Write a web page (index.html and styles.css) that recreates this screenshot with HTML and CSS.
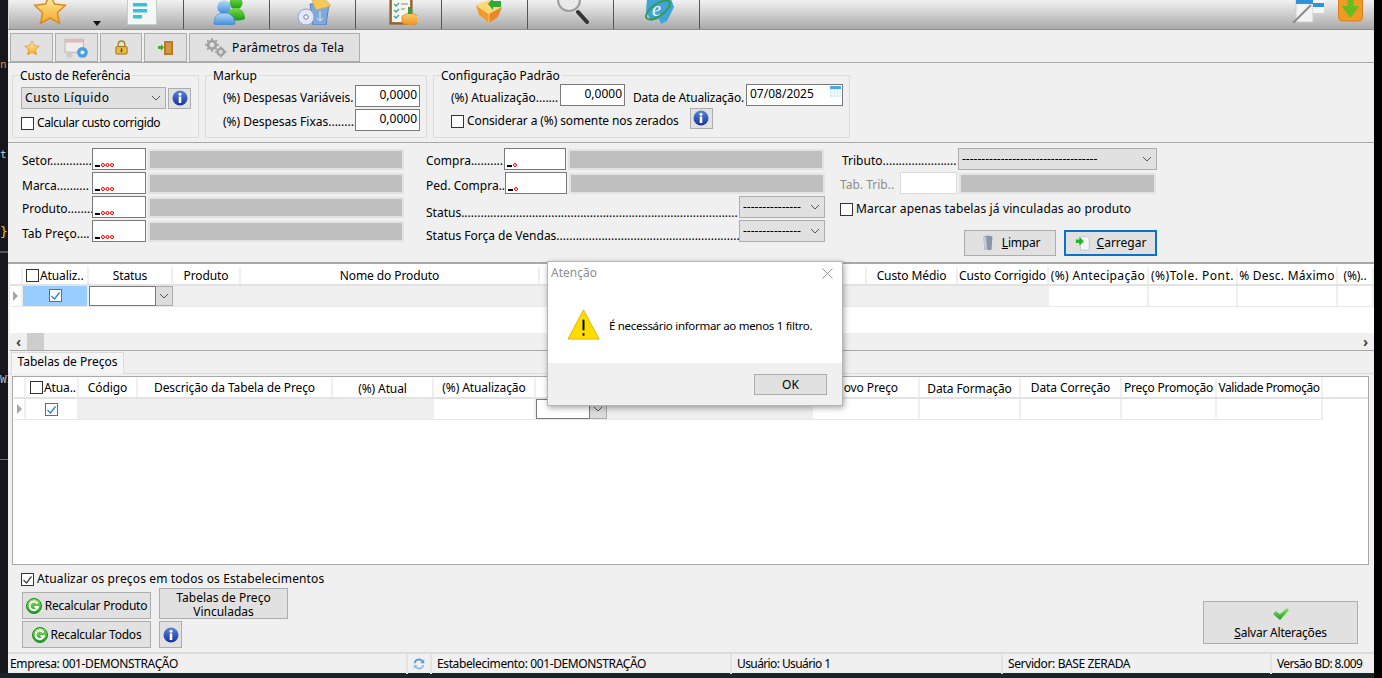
FILE: index.html
```html
<!DOCTYPE html>
<html lang="pt-BR">
<head>
<meta charset="utf-8">
<title>Parâmetros da Tela</title>
<link rel="stylesheet" href="styles.css">
</head>
<body>
<svg class="defs" aria-hidden="true">
  <defs>
    <linearGradient id="gold" x1="0" y1="0" x2="0" y2="1"><stop offset="0" stop-color="#fff3b0"/><stop offset="1" stop-color="#f5a623"/></linearGradient>
    <linearGradient id="blueg" x1="0" y1="0" x2="0" y2="1"><stop offset="0" stop-color="#5b86d8"/><stop offset="1" stop-color="#16329a"/></linearGradient>
    <linearGradient id="greeng" x1="0" y1="0" x2="0" y2="1"><stop offset="0" stop-color="#8fe36a"/><stop offset="1" stop-color="#1f9a20"/></linearGradient>
    <linearGradient id="userb" x1="0" y1="0" x2="0" y2="1"><stop offset="0" stop-color="#b5dcf7"/><stop offset="1" stop-color="#3f8ad8"/></linearGradient>
    <linearGradient id="userg" x1="0" y1="0" x2="0" y2="1"><stop offset="0" stop-color="#7fdc4a"/><stop offset="1" stop-color="#169a1a"/></linearGradient>
    <linearGradient id="boxo" x1="0" y1="0" x2="0" y2="1"><stop offset="0" stop-color="#fbd56e"/><stop offset="1" stop-color="#ee8f26"/></linearGradient>
    <symbol id="star" viewBox="0 0 24 24"><path d="M12 1.500l3.200 7 7.600.9-5.600 5.200 1.500 7.600L12 18.400l-6.700 3.800 1.500-7.600L1.200 9.400l7.600-.9z" fill="url(#gold)" stroke="#d98a1f"/></symbol>
    <symbol id="info" viewBox="0 0 16 16"><circle cx="8" cy="8" r="7.500" fill="url(#blueg)"/><rect x="6.700" y="6.500" width="2.600" height="6.500" fill="#fff"/><circle cx="8" cy="4.300" r="1.500" fill="#fff"/></symbol>
    <symbol id="chev" viewBox="0 0 10 6"><path d="M1 1l4 4 4-4" fill="none" stroke="#555" stroke-width="1"/></symbol>
    <symbol id="mask4" viewBox="0 0 22 5"><rect x="0" y="3" width="5" height="2" fill="#000"/><g fill="none" stroke="#e00000"><circle cx="8" cy="3" r="1.500"/><circle cx="12.500" cy="3" r="1.500"/><circle cx="17" cy="3" r="1.500"/></g></symbol>
    <symbol id="mask1" viewBox="0 0 22 5"><rect x="0" y="3" width="5" height="2" fill="#000"/><circle cx="8" cy="3" r="1.500" fill="none" stroke="#e00000"/></symbol>
    <symbol id="reload" viewBox="0 0 16 16"><circle cx="8" cy="8" r="7.500" fill="url(#greeng)" stroke="#1a8a1a"/><path d="M11.500 5.500A4.300 4.300 0 1 0 12 9H8.500" fill="none" stroke="#fff" stroke-width="2"/></symbol>
    <symbol id="tick" viewBox="0 0 13 13"><path d="M2.500 7l3 3 5-6.500" fill="none" stroke="#2a7fd8" stroke-width="1.300"/></symbol>
  </defs>
</svg>

<span class="bg-frag frag-n">n.</span>
<span class="bg-frag frag-t">t</span>
<span class="bg-frag frag-b">}</span>
<span class="bg-frag frag-w">WI</span>
<span class="bg-line"></span>
<span class="bg-line2"></span>
<span class="bg-foot"></span>
<span class="bg-right"></span>

<div class="window">
  <nav class="toolbar">
    <div class="tb-btn tb-first">
      <svg class="star-big"><use href="#star"/></svg>
      <span class="tb-caret"></span>
      <svg class="tb-list" viewBox="0 0 30 32"><rect x=".5" y="0" width="29" height="31.500" fill="#f4f7f5" stroke="#c5cfca"/><g fill="#35c3d8"><rect x="6" y="3" width="19" height="4"/><rect x="6" y="10" width="14" height="3.500"/><rect x="6" y="16" width="14" height="3.500"/><rect x="6" y="22" width="9" height="3.500"/></g></svg>
    </div>
    <div class="tb-btn"><svg class="tb-icon" viewBox="0 0 36 32"><circle cx="27" cy="10" r="6.500" fill="url(#userg)"/><path d="M18 26c0-7 3-11 9-11s9 4 9 11c-5 2-13 2-18 0z" fill="url(#userg)"/><circle cx="15" cy="14" r="6.800" fill="url(#userb)"/><path d="M5 31c0-8 4-11 10-11s11 3 11 11c-6 2-15 2-21 0z" fill="url(#userb)" stroke="#3a7fc8" stroke-width=".6"/></svg></div>
    <div class="tb-btn"><svg class="tb-icon" viewBox="0 0 36 32"><path d="M15 11h19l-3 21H18z" fill="#7fa9dc" stroke="#4f7fbe"/><path d="M17 7l12-2 7 8-15 4z" fill="#f4c95c" stroke="#d9a63a" stroke-width=".6"/><path d="M25 18v10l-3-3M25 28l3-3" fill="none" stroke="#dfeaf8"/><circle cx="11" cy="24" r="8" fill="#e2e6f6" stroke="#98a2cc"/><circle cx="11" cy="24" r="2.200" fill="#fff" stroke="#6f7cb0"/></svg></div>
    <div class="tb-btn"><svg class="tb-icon" viewBox="0 0 36 32"><rect x="9" y="0" width="22" height="31" fill="#a7753d" stroke="#7a5227"/><rect x="11" y="2" width="18" height="27" fill="#f6f5ee"/><path d="M13 11l2 2 3-3M13 17l2 2 3-3M13 23l2 2 3-3" fill="none" stroke="#2aa6a6" stroke-width="1.300"/><path d="M20 11h7M20 16h4" stroke="#888"/><path d="M21 23l8-4 8 4v7l-8 3-8-3z" fill="url(#boxo)" stroke="#c97b1c" stroke-width=".6"/><rect x="27" y="14" width="4" height="7" fill="#35a035"/></svg></div>
    <div class="tb-btn"><svg class="tb-icon" viewBox="0 0 36 32"><path d="M9 12l13-5 13 7-13 7z" fill="#fbd56e"/><path d="M9 12l13 9v9L12 22z" fill="#f39a2c"/><path d="M22 21l13-7-4 10-9 6z" fill="#e8862a"/><path d="M9 12l13 9M22 21v9M13 9l15 8" fill="none" stroke="#f7dfa0" stroke-width=".7"/><path d="M21 11l5-6v3h8v6h-8v3z" fill="#2faa36"/></svg></div>
    <div class="tb-btn"><svg class="tb-icon" viewBox="0 0 36 32"><circle cx="16" cy="7" r="11" fill="#e9e9e9" stroke="#9c9c9c" stroke-width="2"/><path d="M9 4a8 8 0 0 1 8-4" fill="none" stroke="#fff" stroke-width="2"/><path d="M25 19l9 10" stroke="#333" stroke-width="4" stroke-linecap="round"/></svg></div>
    <div class="tb-btn"><svg class="tb-icon" viewBox="0 0 36 32"><path d="M8 6h24l3 8-7 14-6 3-2-5-8 2-5-10z" fill="#3fa5d8"/><ellipse cx="19" cy="17" rx="14" ry="6" fill="none" stroke="#3b9a52" stroke-width="2" transform="rotate(-35 19 17)"/><text x="13" y="23" class="tb-e">e</text></svg></div>
    <div class="tb-fill">
      <svg class="tb-right tb-r1" viewBox="0 0 32 23"><rect x="4" y="-2" width="17" height="24" fill="#f3f3f3" stroke="#ccc"/><rect x="4" y="0" width="17" height="4" fill="#2b94dc"/><rect x="21" y="0" width="11" height="13" fill="#f5f5f5"/><rect x="21" y="3" width="11" height="4" fill="#2b94dc"/><path d="M1 23L19 5" stroke="#8a8a8a" stroke-width="2"/></svg>
      <svg class="tb-right tb-r2" viewBox="0 0 25 23"><rect x=".5" y="-6" width="24" height="27" rx="4" fill="#f39a24" stroke="#d97e16"/><path d="M9.500-2h6v8h6L12.500 18l-9-12h6z" fill="#67bd1e"/></svg>
    </div>
  </nav>

  <div class="action-row">
    <button class="btn btn-sq"><svg class="i16"><use href="#star"/></svg></button>
    <button class="btn btn-sq"><svg class="i24" viewBox="0 0 24 20"><rect x="1" y="2" width="17" height="12" fill="#eee" stroke="#bbb"/><rect x="1" y="2" width="17" height="3" fill="#e4b8b8"/><circle cx="17" cy="14" r="5" fill="#4f9fe0"/><circle cx="17" cy="14" r="1.800" fill="#dff"/><circle cx="5" cy="16" r="3" fill="#ccc"/></svg></button>
    <button class="btn btn-sq btn-sq-n"><svg class="i15" viewBox="0 0 16 16"><path d="M4.500 7V4.500a3.500 3.500 0 0 1 7 0V7" fill="none" stroke="#a9871e" stroke-width="1.500"/><rect x="2" y="7" width="12" height="8" rx="1" fill="#e7b93c" stroke="#97701a"/><rect x="7.200" y="9" width="1.600" height="4" fill="#543"/></svg></button>
    <button class="btn btn-sq"><svg class="i16" viewBox="0 0 16 16"><path d="M6 1h9v14H6z" fill="#b8792a"/><rect x="8" y="3" width="5" height="10" fill="#d3993f"/><path d="M0 6h3V4l3 3.500L3 11V9H0z" fill="#4aa83a"/></svg></button>
    <button class="btn btn-params"><svg class="i26" viewBox="0 0 26 24"><g stroke="#a2a2a2" stroke-width="2"><path d="M9 1v16M1 9h16M3.500 3.500l11 11M14.500 3.500l-11 11M19 10.500v13M12.500 17h13"/></g><g fill="#a2a2a2"><circle cx="9" cy="9" r="6"/><circle cx="19" cy="17" r="5"/></g><g fill="#e1e1e1"><circle cx="9" cy="9" r="2.800"/><circle cx="19" cy="17" r="2.200"/></g></svg><span class="ls-p2">Parâmetros da Tela</span></button>
  </div>

  <section class="config">
    <fieldset class="group g-custo">
      <legend class="ls-n1">Custo de Referência</legend>
      <div class="line l-custo">
        <div class="select s-custo"><span class="ls-w">Custo Líquido</span><svg class="chev"><use href="#chev"/></svg></div>
        <button class="btn btn-info"><svg class="i16"><use href="#info"/></svg></button>
      </div>
      <label class="check-line cl-custo"><span class="check"></span><span class="ls-n4">Calcular custo corrigido</span></label>
    </fieldset>
    <fieldset class="group g-markup">
      <legend>Markup</legend>
      <div class="line l-mk"><span class="lbl w-mk">(%) Despesas Variáveis.</span><span class="input num">0,0000</span></div>
      <div class="line l-mk"><span class="lbl w-mk">(%) Despesas Fixas.........</span><span class="input num">0,0000</span></div>
    </fieldset>
    <fieldset class="group g-conf">
      <legend>Configuração Padrão</legend>
      <div class="line l-cf">
        <span class="lbl w-at">(%) Atualização.......</span><span class="input num">0,0000</span>
        <span class="lbl w-dt">Data de Atualização.</span>
        <span class="input date">07/08/2025<svg class="cal" viewBox="0 0 11 11"><rect width="11" height="11" fill="#cfe8fa"/><rect width="11" height="3" fill="#4aa8e8"/><path d="M0 5h11M0 8h11M3 3v8M6 3v8M9 3v8" stroke="#fff"/></svg></span>
      </div>
      <div class="line l-cf2">
        <label class="check-line cl-cons"><span class="check"></span><span class="ls-n1">Considerar a (%) somente nos zerados</span></label>
        <button class="btn btn-info bi-conf"><svg class="i16"><use href="#info"/></svg></button>
      </div>
    </fieldset>
  </section>

  <section class="filters">
    <div class="f-col f1">
      <div class="f-row"><span class="lbl w70 t1">Setor.............</span><span class="input mask"><svg class="m"><use href="#mask4"/></svg></span><span class="ro ro1"></span></div>
      <div class="f-row"><span class="lbl w70 t2">Marca..........</span><span class="input mask"><svg class="m"><use href="#mask4"/></svg></span><span class="ro ro1"></span></div>
      <div class="f-row"><span class="lbl w70 t1">Produto........</span><span class="input mask"><svg class="m"><use href="#mask4"/></svg></span><span class="ro ro1"></span></div>
      <div class="f-row"><span class="lbl w70 t2">Tab Preço....</span><span class="input mask"><svg class="m"><use href="#mask4"/></svg></span><span class="ro ro1"></span></div>
    </div>
    <div class="f-col f2">
      <div class="f-row"><span class="lbl w78 t1">Compra..........</span><span class="input mask mk2"><svg class="m"><use href="#mask1"/></svg></span><span class="ro ro2"></span></div>
      <div class="f-row"><span class="lbl w79 t2">Ped. Compra..</span><span class="input mask mk2"><svg class="m"><use href="#mask1"/></svg></span><span class="ro ro2"></span></div>
      <div class="f-row"><span class="lbl w313 t5">Status......................................................................................</span><div class="select s-st"><span>---------------</span><svg class="chev"><use href="#chev"/></svg></div></div>
      <div class="f-row"><span class="lbl w313 t4">Status Força de Vendas.........................................................</span><div class="select s-st"><span>---------------</span><svg class="chev"><use href="#chev"/></svg></div></div>
    </div>
    <div class="f-col f3">
      <div class="f-row"><span class="lbl w116 t1">Tributo.......................</span><div class="select s-tr"><span>-----------------------------------</span><svg class="chev"><use href="#chev"/></svg></div></div>
      <div class="f-row r-trib"><span class="lbl w60 off t1">Tab. Trib..</span><span class="input in-off"></span><span class="ro ro3"></span></div>
      <label class="check-line cl-marc"><span class="check"></span><span class="ls-p1">Marcar apenas tabelas já vinculadas ao produto</span></label>
      <div class="f-actions">
        <button class="btn btn-act"><svg class="i16" viewBox="0 0 16 18"><path d="M3 2c2-1.500 8-1.500 10 0l-1 15H4z" fill="#8c95a6"/><path d="M6 2l1 15H4L3 2z" fill="#c3c9d4"/></svg><span class="ls-n2"><u>L</u>impar</span></button>
        <button class="btn btn-act btn-focus"><svg class="i16" viewBox="0 0 16 18"><path d="M5 2h8l2 2v13H5z" fill="#f5f6f8" stroke="#bcc4d0"/><path d="M0 5h4V2l5 5-5 5V9H0z" fill="#25b52b"/></svg><span><u>C</u>arregar</span></button>
      </div>
    </div>
  </section>

  <section class="grid1">
    <div class="row1 head1">
      <div class="cell c-ind"></div>
      <div class="cell c-chk"><span class="check"></span>Atualiz..</div>
      <div class="cell">Status</div>
      <div class="cell">Produto</div>
      <div class="cell">Nome do Produto</div>
      <div class="cell c-clip">Custo Líquido</div>
      <div class="cell">Custo Médio</div>
      <div class="cell">Custo Corrigido</div>
      <div class="cell wide1">(%) Antecipação</div>
      <div class="cell wide2">(%)Tole. Pont.</div>
      <div class="cell wide3">% Desc. Máximo</div>
      <div class="cell">(%)..</div>
    </div>
    <div class="row1 data1">
      <div class="cell c-ind"><span class="tri"></span></div>
      <div class="cell d-sel"><span class="check on"><svg class="tick"><use href="#tick"/></svg></span></div>
      <div class="cell d-cbo"><span class="cbo"><span class="cbo-box"></span><span class="cbo-btn"><svg class="chev"><use href="#chev"/></svg></span></span></div>
      <div class="cell d-g"></div><div class="cell d-g"></div><div class="cell d-g"></div><div class="cell d-g"></div><div class="cell d-g"></div>
      <div class="cell d-w"></div><div class="cell d-w"></div><div class="cell d-w"></div><div class="cell d-w"></div>
    </div>
    <div class="grid-space"></div>
    <div class="hscroll">
      <span class="arrow">‹</span><span class="thumb"></span><span class="hs-fill"></span><span class="arrow">›</span>
    </div>
  </section>

  <section class="tabs">
    <div class="tab-strip"><span class="tab">Tabelas de Preços</span></div>
    <div class="grid2">
      <div class="row2 head2">
        <div class="cell c-ind"></div>
        <div class="cell c-chk"><span class="check"></span>Atua..</div>
        <div class="cell">Código</div>
        <div class="cell">Descrição da Tabela de Preço</div>
        <div class="cell low">(%) Atual</div>
        <div class="cell">(%) Atualização</div>
        <div class="cell">Tipo</div>
        <div class="cell">Preço Atual</div>
        <div class="cell c-right">Novo Preço</div>
        <div class="cell low">Data Formação</div>
        <div class="cell">Data Correção</div>
        <div class="cell tight1">Preço Promoção</div>
        <div class="cell tight2">Validade Promoção</div>
      </div>
      <div class="row2 data2">
        <div class="cell c-ind"><span class="tri"></span></div>
        <div class="cell d-w"><span class="check on"><svg class="tick"><use href="#tick"/></svg></span></div>
        <div class="cell d-g"></div><div class="cell d-g"></div><div class="cell d-g"></div>
        <div class="cell d-w"></div>
        <div class="cell d-cbo"><span class="cbo"><span class="cbo-box"></span><span class="cbo-btn"><svg class="chev"><use href="#chev"/></svg></span></span></div>
        <div class="cell d-g"></div>
        <div class="cell d-w"></div><div class="cell d-w"></div><div class="cell d-w"></div><div class="cell d-w"></div><div class="cell d-w"></div>
      </div>
    </div>
  </section>

  <section class="bottom">
    <div class="bottom-left">
      <label class="check-line cl-all"><span class="check checked"><svg class="tick tick-d" viewBox="0 0 13 13"><path d="M2.500 7l3 3 5-6.500" fill="none" stroke="#444" stroke-width="1.300"/></svg></span><span class="ls-p1">Atualizar os preços em todos os Estabelecimentos</span></label>
      <div class="recalc">
        <div class="recalc-col">
          <button class="btn btn-rc"><svg class="i16"><use href="#reload"/></svg><span class="ls-n2">Recalcular Produto</span></button>
          <button class="btn btn-rc"><svg class="i16"><use href="#reload"/></svg><span class="ls-n2">Recalcular Todos</span></button>
        </div>
        <div class="recalc-col col2">
          <button class="btn btn-tab">Tabelas de Preço<br>Vinculadas</button>
          <button class="btn btn-info bi-low"><svg class="i16"><use href="#info"/></svg></button>
        </div>
      </div>
    </div>
    <button class="btn btn-save"><svg class="i-check" viewBox="0 0 18 14"><path d="M1 7l3-3 4 3 7-6 2 2-9 10z" fill="url(#greeng)"/></svg><span class="ls-n2"><u>S</u>alvar Alterações</span></button>
  </section>

  <footer class="status">
    <span class="st st1">Empresa: 001-DEMONSTRAÇÃO</span>
    <span class="st st2"><svg class="i14" viewBox="0 0 16 16"><path d="M2 7a6 6 0 0 1 10.500-3L14 2.500V7H9.500l1.500-1.500A4 4 0 0 0 4 7z" fill="#5b9bd0"/><path d="M14 9a6 6 0 0 1-10.500 3L2 13.500V9h4.500L5 10.500A4 4 0 0 0 12 9z" fill="#8dbfe4"/></svg></span>
    <span class="st st3">Estabelecimento: 001-DEMONSTRAÇÃO</span>
    <span class="st st4">Usuário: Usuário 1</span>
    <span class="st st5">Servidor: BASE ZERADA</span>
    <span class="st st6">Versão BD: 8.009</span>
  </footer>

  <div class="dialog" role="dialog">
    <div class="d-title"><span>Atenção</span><svg class="d-x" viewBox="0 0 11 11"><path d="M.5.500l10 10M10.500.500l-10 10" stroke="#999"/></svg></div>
    <div class="d-body">
      <svg class="d-warn" viewBox="0 0 34 32"><path d="M17 1L33 31H1z" fill="#ffdc00" stroke="#eab000" stroke-linejoin="round"/><rect x="16" y="11" width="2" height="11"/><rect x="16" y="25" width="2" height="2.500"/></svg>
      <p>É necessário informar ao menos 1 filtro.</p>
    </div>
    <div class="d-foot"><button class="btn btn-ok">OK</button></div>
  </div>
</div>
</body>
</html>
```
FILE: styles.css
```css
* { box-sizing: border-box; }
html, body { margin: 0; height: 678px; overflow: hidden; }
body {
  background: #16171d;
  font-family: "Noto Sans", "Open Sans", sans-serif;
  font-size: 12px;
  line-height: 16px;
  color: #000;
  position: relative;
}
.defs { position: absolute; width: 0; height: 0; }
button { font: inherit; color: inherit; padding: 0; }

.ls-w { letter-spacing: .55px; }
.ls-p2 { letter-spacing: .22px; }
.ls-p1 { letter-spacing: .13px; }
.ls-n1 { letter-spacing: -.1px; }
.ls-n2 { letter-spacing: -.22px; }
.ls-n4 { letter-spacing: -.42px; }

.bg-frag { position: absolute; left: 0; width: 8px; overflow: hidden; font-family: "DejaVu Sans Mono", monospace; font-size: 11px; white-space: nowrap; }
.frag-n { top: 57px; color: #d98a4a; }
.frag-t { top: 147px; color: #cfd2d8; }
.frag-b { top: 224px; color: #e6c34a; font-size: 13px; }
.frag-w { top: 372px; color: #b9bcc4; }
.bg-line { position: absolute; left: 0; top: 459px; width: 8px; height: 1px; background: #d83c8c; }
.bg-line2 { position: absolute; left: 0; top: 251px; width: 8px; height: 2px; background: #55565c; }
.bg-foot { position: absolute; left: 0; top: 673px; width: 1382px; height: 5px; background: #14262b; }
.bg-right { position: absolute; left: 1374px; top: 0; width: 8px; height: 678px; background: #000; }

.window {
  position: relative;
  width: 1366px;
  height: 673px;
  margin-left: 8px;
  background: #f0f0f0;
  display: flex;
  flex-direction: column;
}

/* Toolbar */
.toolbar {
  height: 30px;
  flex: none;
  display: flex;
  overflow: hidden;
  background: linear-gradient(#f2f2f2, #a9a9a9);
  border-bottom: 1px solid #8f8f8f;
}
.tb-btn {
  position: relative;
  width: 86px;
  flex: none;
  display: flex;
  align-items: flex-end;
  justify-content: center;
  border-right: 1px solid #555;
}
.tb-first { width: 176px; border-left: 1px solid #d9d9d9; justify-content: flex-start; padding-left: 24px; gap: 60px; }
.tb-icon { width: 36px; height: 32px; flex: none; margin-bottom: 4px; }
.star-big { width: 34px; height: 34px; flex: none; margin-bottom: 3px; }
.tb-list { width: 30px; height: 32px; flex: none; margin-bottom: 4px; }
.tb-caret { position: absolute; left: 84px; bottom: 3px; border: 4px solid transparent; border-top: 5px solid #111; border-bottom: 0; }
.tb-e { font-family: "Liberation Serif", serif; font-style: italic; font-size: 20px; fill: #fff; }
.tb-fill { flex: 1; display: flex; justify-content: flex-end; align-items: flex-start; gap: 14px; padding-right: 11px; }
.tb-right { flex: none; height: 23px; }
.tb-r1 { width: 32px; }
.tb-r2 { width: 25px; }

/* Buttons */
.btn {
  background: #e1e1e1;
  border: 1px solid #adadad;
  display: inline-flex;
  align-items: center;
  justify-content: center;
  white-space: nowrap;
}
.i16 { width: 16px; height: 16px; flex: none; }
.i15 { width: 15px; height: 15px; flex: none; }
.i24 { width: 26px; height: 22px; flex: none; }
.i26 { width: 23px; height: 21px; flex: none; }
.i14 { width: 14px; height: 14px; }

.action-row {
  height: 33px;
  flex: none;
  padding: 3px 0 0 2px;
  display: flex;
  gap: 2px;
  border-bottom: 1px solid #a8a8a8;
}
.action-row .btn { height: 29px; }
.btn-sq { width: 43px; }
.btn-sq-n { width: 42px; }
.btn-params { width: 171px; gap: 5px; justify-content: flex-start; padding-left: 14px; }

/* Config */
.config {
  height: 80px;
  flex: none;
  display: flex;
  gap: 6px;
  padding: 5px 0 0 4px;
  border-bottom: 1px solid #a8a8a8;
}
.group {
  margin: 0;
  padding: 0 0 0 8px;
  min-width: 0;
  height: 70px;
  border: 1px solid #dcdcdc;
  flex: none;
}
.group legend { padding: 0 2px 0 0; margin-left: -1px; line-height: 15px; }
.g-custo { width: 187px; }
.g-markup { width: 222px; padding-left: 17px; }
.g-conf { width: 417px; padding-left: 17px; }
.g-markup legend, .g-conf legend { margin-left: -10px; }
.line { display: flex; align-items: center; }
.l-custo { margin-top: 4px; }
.select {
  background: #e1e1e1;
  border: 1px solid #adadad;
  display: flex;
  align-items: center;
  justify-content: space-between;
  padding: 0 4px 0 3px;
  height: 22px;
  flex: none;
}
.s-custo { width: 145px; margin-right: 2px; }
.chev { width: 10px; height: 6px; flex: none; }
.btn-info { width: 23px; height: 21px; flex: none; }
.check-line { display: flex; align-items: center; gap: 3px; white-space: nowrap; }
.check { width: 13px; height: 13px; border: 1px solid #333; background: #fff; flex: none; display: inline-block; }
.cl-custo { margin-top: 6px; }
.lbl { display: block; overflow: hidden; white-space: nowrap; flex: none; }
.w-mk { width: 132px; margin-top: 4px; }
.input {
  background: #fff;
  border: 1px solid #7a7a7a;
  flex: none;
}
.num { width: 65px; height: 22px; text-align: right; padding-right: 2px; line-height: 18px; }
.l-mk { height: 24px; }
.l-mk:first-of-type { height: 25px; }
.w-at { width: 109px; margin-top: 6px; }
.w-dt { width: 113px; margin: 6px 0 0 8px; letter-spacing: -.18px; }
.l-cf { height: 23px; }
.date { width: 97px; height: 22px; padding-left: 3px; line-height: 18px; position: relative; }
.cal { position: absolute; right: 1px; top: 1px; width: 11px; height: 11px; }
.l-cf2 { margin-top: 1px; }
.cl-cons { margin-top: 6px; }
.bi-conf { margin-left: 11px; }

/* Filters */
.filters {
  height: 121px;
  flex: none;
  display: flex;
  padding: 5px 0 0 14px;
  border-bottom: 2px solid #a8a8a8;
}
.f-col { display: flex; flex-direction: column; gap: 2px; flex: none; }
.f1 { width: 404px; }
.f2 { width: 416px; }
.f3 { width: 320px; }
.f-row { display: flex; align-items: center; gap: 2px; height: 22px; }
.t1 { margin-top: 4px; }
.t2 { margin-top: 6px; }
.t4 { margin-top: 10px; }
.t5 { margin-top: 12px; }
.lbl.w70 { width: 70px; margin-right: -2px; }
.lbl.w78 { width: 78px; margin-right: -2px; }
.lbl.w79 { width: 79px; margin-right: -2px; }
.lbl.w313 { width: 313px; margin-right: -2px; }
.lbl.w116 { width: 116px; margin-right: -2px; }
.lbl.w60 { width: 60px; margin-right: -2px; margin-left: -2px; }
.off { color: #8c8c8c; }
.mask { width: 54px; height: 22px; position: relative; }
.mk2 { width: 62px; }
.m { position: absolute; left: 2px; bottom: 2px; width: 22px; height: 5px; }
.ro { height: 21px; background: #bfbfbf; border: 2px solid #e3e3e3; flex: none; }
.ro1 { width: 256px; }
.ro2 { width: 256px; }
.ro3 { width: 197px; }
.s-st { width: 86px; }
.s-tr { width: 199px; }
.in-off { width: 57px; height: 22px; border-color: #dcdcdc; }
.cl-marc { margin: 5px 0 0 -2px; }
.f-actions { display: flex; gap: 8px; margin: 11px 0 0 122px; }
.btn-act { width: 92px; height: 26px; gap: 6px; }
.btn-focus { width: 93px; border: 2px solid #0a72c9; }

/* Grid 1 */
.grid1 {
  height: 87px;
  flex: none;
  margin: 0 0 0 2px;
  background: #fff;
  display: flex;
  flex-direction: column;
  border-bottom: 1px solid #a8a8a8;
}
.row1 { display: grid; grid-template-columns: 13px 66px 84px 68px 299px 327px 91px 91px 100px 89px 100px 36px; flex: none; letter-spacing: -.1px; }
.cell {
  display: flex;
  align-items: center;
  justify-content: center;
  white-space: nowrap;
  overflow: hidden;
  min-width: 0;
  border-right: 2px solid #efefef;
}
.head1 { height: 21px; border-bottom: 2px solid #e3e3e3; margin-top: 1px; padding-top: 2px; }
.wide1 { letter-spacing: .35px; }
.wide2 { letter-spacing: .5px; }
.wide3 { letter-spacing: .25px; }
.data1 { height: 21px; border-bottom: 1px solid #e8e8e8; }
.c-chk { gap: 1px; justify-content: flex-start; padding-left: 3px; }
.c-ind { background: #fff; }
.tri { width: 0; height: 0; border-left: 5px solid #a8a8a8; border-top: 5px solid transparent; border-bottom: 5px solid transparent; position: relative; }
.d-sel { background: #99ccff; padding-bottom: 1px; }
.d-g { background: #efefef; border-right: 0; }
.d-w { background: #fff; }
.d-cbo { background: #efefef; justify-content: flex-start; border-right: 0; overflow: visible; }
.cbo { display: flex; height: 20px; width: 100%; flex: none; }
.cbo-box { flex: 1; background: #fff; border: 1px solid #7a7a7a; }
.cbo-btn { width: 17px; background: #dcdcdc; border: 1px solid #adadad; border-left: 0; display: flex; align-items: center; justify-content: center; }
.on { border: 1px solid #1b7fd8; display: flex; align-items: center; justify-content: center; }
.tick { width: 13px; height: 13px; flex: none; margin: -1px; }
.grid-space { flex: 1; }
.hscroll { height: 17px; flex: none; background: #f0f0f0; display: flex; align-items: center; }
.arrow { width: 17px; text-align: center; font-weight: 700; color: #444; font-size: 14px; flex: none; }
.thumb { width: 17px; height: 17px; background: #cdcdcd; flex: none; }
.hs-fill { flex: 1; }

/* Tabs */
.tabs { height: 214px; flex: none; display: flex; flex-direction: column; }
.tab-strip { height: 23px; flex: none; padding: 1px 0 0 3px; border-bottom: 1px solid #dcdcdc; display: flex; }
.tab { width: 113px; height: 22px; text-align: center; background: #f5f5f5; border: 1px solid #dcdcdc; border-bottom: 0; line-height: 18px; }
.grid2 { height: 189px; margin: 2px 5px 0 4px; background: #fff; border: 1px solid #a8a8a8; flex: none; padding: 0 0 0 1px; }
.row2 { display: grid; grid-template-columns: 12px 53px 59px 195px 101px 102px 71px 206px 107px 101px 101px 95px 106px; letter-spacing: -.1px; }
.row2 .c-chk { padding-left: 4px; }
.head2 { height: 22px; border-bottom: 2px solid #e3e3e3; padding-top: 1px; }
.data2 { height: 21px; border-bottom: 1px solid #e8e8e8; width: 1309px; }
.low { padding-top: 3px; }
.c-right { justify-content: flex-end; padding-right: 20px; }
.tight1 { letter-spacing: -.25px; }
.tight2 { letter-spacing: -.45px; }

/* Bottom */
.bottom { height: 89px; flex: none; display: flex; justify-content: space-between; padding: 0 16px 0 14px; border-bottom: 2px solid #dcdcdc; }
.bottom-left { display: flex; flex-direction: column; }
.cl-all { margin: 6px 0 0 -1px; }
.checked { display: flex; align-items: center; justify-content: center; }
.tick-d { margin: -1px; }
.recalc { display: flex; gap: 8px; margin-top: 1px; }
.recalc-col { display: flex; flex-direction: column; gap: 2px; padding-top: 4px; }
.col2 { padding-top: 0; gap: 2px; }
.btn-rc { width: 129px; height: 27px; gap: 3px; }
.btn-tab { width: 129px; height: 31px; line-height: 14px; white-space: normal; padding-top: 2px; }
.bi-low { height: 27px; }
.btn-save { width: 155px; height: 43px; margin-top: 36px; flex-direction: column; gap: 4px; padding-top: 2px; }
.i-check { width: 18px; height: 14px; }

/* Status bar */
.status { height: 20px; flex: none; display: flex; font-size: 12px; line-height: 19px; letter-spacing: -.38px; }
.st { border-right: 2px solid #e3e3e3; padding-left: 2px; white-space: nowrap; flex: none; overflow: hidden; }
.st1 { width: 400px; }
.st2 { width: 24px; display: flex; align-items: center; justify-content: center; padding: 0; }
.st3 { width: 300px; padding-left: 5px; }
.st4 { width: 271px; padding-left: 5px; letter-spacing: -.6px; }
.st5 { width: 269px; padding-left: 5px; }
.st6 { flex: 1; border-right: 0; padding-left: 5px; letter-spacing: -.62px; }

/* Dialog */
.dialog {
  position: absolute;
  left: 539px;
  top: 261px;
  width: 296px;
  height: 145px;
  background: #fff;
  border: 1px solid #b5b5b5;
  box-shadow: 1px 2px 6px rgba(0,0,0,.35);
  display: flex;
  flex-direction: column;
  z-index: 5;
}
.d-title { height: 22px; flex: none; display: flex; align-items: center; justify-content: space-between; padding: 0 9px 0 3px; color: #8f8f8f; }
.d-x { width: 11px; height: 11px; }
.d-body { flex: 1; display: flex; align-items: flex-start; gap: 9px; padding: 24px 0 0 19px; }
.d-body p { margin: 10px 0 0; font-size: 11.5px; letter-spacing: -.3px; }
.d-warn { width: 33px; height: 33px; flex: none; }
.d-foot { height: 42px; flex: none; background: #f0f0f0; display: flex; justify-content: flex-end; padding: 11px 15px 0 0; }
.btn-ok { width: 73px; height: 21px; }
```
